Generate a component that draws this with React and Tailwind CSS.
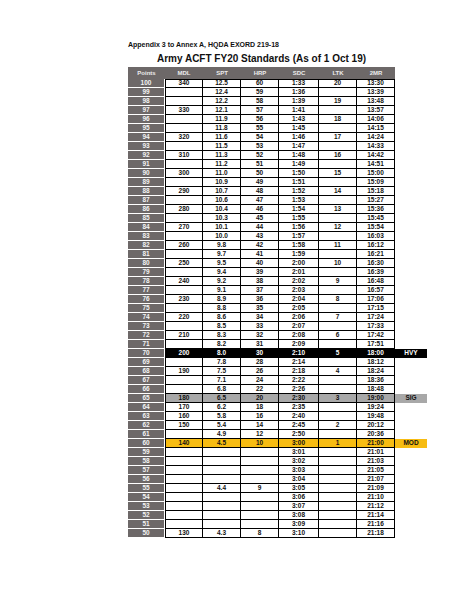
import clsx from "clsx"

const rows = [
  [100, "340", "12.5", "60", "1:33", "20", "13:30"],
  [99, "", "12.4", "59", "1:36", "", "13:39"],
  [98, "", "12.2", "58", "1:39", "19", "13:48"],
  [97, "330", "12.1", "57", "1:41", "", "13:57"],
  [96, "", "11.9", "56", "1:43", "18", "14:06"],
  [95, "", "11.8", "55", "1:45", "", "14:15"],
  [94, "320", "11.6", "54", "1:46", "17", "14:24"],
  [93, "", "11.5", "53", "1:47", "", "14:33"],
  [92, "310", "11.3", "52", "1:48", "16", "14:42"],
  [91, "", "11.2", "51", "1:49", "", "14:51"],
  [90, "300", "11.0", "50", "1:50", "15", "15:00"],
  [89, "", "10.9", "49", "1:51", "", "15:09"],
  [88, "290", "10.7", "48", "1:52", "14", "15:18"],
  [87, "", "10.6", "47", "1:53", "", "15:27"],
  [86, "280", "10.4", "46", "1:54", "13", "15:36"],
  [85, "", "10.3", "45", "1:55", "", "15:45"],
  [84, "270", "10.1", "44", "1:56", "12", "15:54"],
  [83, "", "10.0", "43", "1:57", "", "16:03"],
  [82, "260", "9.8", "42", "1:58", "11", "16:12"],
  [81, "", "9.7", "41", "1:59", "", "16:21"],
  [80, "250", "9.5", "40", "2:00", "10", "16:30"],
  [79, "", "9.4", "39", "2:01", "", "16:39"],
  [78, "240", "9.2", "38", "2:02", "9", "16:48"],
  [77, "", "9.1", "37", "2:03", "", "16:57"],
  [76, "230", "8.9", "36", "2:04", "8", "17:06"],
  [75, "", "8.8", "35", "2:05", "", "17:15"],
  [74, "220", "8.6", "34", "2:06", "7", "17:24"],
  [73, "", "8.5", "33", "2:07", "", "17:33"],
  [72, "210", "8.3", "32", "2:08", "6", "17:42"],
  [71, "", "8.2", "31", "2:09", "", "17:51"],
  [70, "200", "8.0", "30", "2:10", "5", "18:00", "HVY"],
  [69, "", "7.8", "28", "2:14", "", "18:12"],
  [68, "190", "7.5", "26", "2:18", "4", "18:24"],
  [67, "", "7.1", "24", "2:22", "", "18:36"],
  [66, "", "6.8", "22", "2:26", "", "18:48"],
  [65, "180", "6.5", "20", "2:30", "3", "19:00", "SIG"],
  [64, "170", "6.2", "18", "2:35", "", "19:24"],
  [63, "160", "5.8", "16", "2:40", "", "19:48"],
  [62, "150", "5.4", "14", "2:45", "2", "20:12"],
  [61, "", "4.9", "12", "2:50", "", "20:36"],
  [60, "140", "4.5", "10", "3:00", "1", "21:00", "MOD"],
  [59, "", "", "", "3:01", "", "21:01"],
  [58, "", "", "", "3:02", "", "21:03"],
  [57, "", "", "", "3:03", "", "21:05"],
  [56, "", "", "", "3:04", "", "21:07"],
  [55, "", "4.4", "9", "3:05", "", "21:09"],
  [54, "", "", "", "3:06", "", "21:10"],
  [53, "", "", "", "3:07", "", "21:12"],
  [52, "", "", "", "3:08", "", "21:14"],
  [51, "", "", "", "3:09", "", "21:16"],
  [50, "130", "4.3", "8", "3:10", "", "21:18"],
]

const heads = ["MDL", "SPT", "HRP", "SDC", "LTK", "2MR"]
const widths = ["w-[38px]", "w-[38px]", "w-[38px]", "w-[40px]", "w-[38px]", "w-[38px]"]

const tone = {
  HVY: { cell: "bg-black text-white", tag: "bg-black text-white" },
  SIG: { cell: "bg-[#a8a8a8] text-[#111]", tag: "bg-[#a8a8a8] text-[#111]" },
  MOD: { cell: "bg-[#f7bc12] text-[#111]", tag: "bg-[#f7bc12] text-[#111]" },
}

function Row({ row, first }) {
  const [pts, ...rest] = row
  const cells = rest.slice(0, 6)
  const tag = rest[6]
  const t = tag ? tone[tag] : null
  return (
    <div className="flex h-[9px]">
      <div className="flex w-[36px] items-center justify-center border-b border-white bg-[#6d6868] text-[#f4f4f4]">
        {pts}
      </div>
      <div className="w-px" />
      {cells.map((c, i) => (
        <div
          key={i}
          className={clsx(
            "flex items-center justify-center border-r border-b border-black",
            widths[i],
            i === 0 && "border-l",
            first && "border-t",
            t ? t.cell : "bg-white text-[#111]"
          )}
        >
          {c}
        </div>
      ))}
      {tag && (
        <div className={clsx("flex w-[32px] items-center justify-center", t.tag)}>{tag}</div>
      )}
    </div>
  )
}

export default function App() {
  return (
    <div className="min-h-[613px] w-[474px] bg-white pl-[128px] pt-[41px] font-['Liberation_Sans',Arial,sans-serif] font-bold text-[#111]">
      <p className="text-[7px] leading-[8px]">Appendix 3 to Annex A, HQDA EXORD 219-18</p>
      <h1 className="mt-[4px] w-[267px] text-center text-[10px] leading-[12px]">
        Army ACFT FY20 Standards (As of 1 Oct 19)
      </h1>
      <div className="mt-[2px] text-[6.5px] leading-none">
        <div className="flex h-[12px] w-[267px] bg-[#6d6868] text-[6px] text-[#ececec]">
          <div className="flex w-[37px] items-center justify-center">Points</div>
          {heads.map((h, i) => (
            <div key={h} className={clsx("flex items-center justify-center", widths[i])}>
              {h}
            </div>
          ))}
        </div>
        {rows.map((r, i) => (
          <Row key={r[0]} row={r} first={i === 0} />
        ))}
      </div>
    </div>
  )
}
